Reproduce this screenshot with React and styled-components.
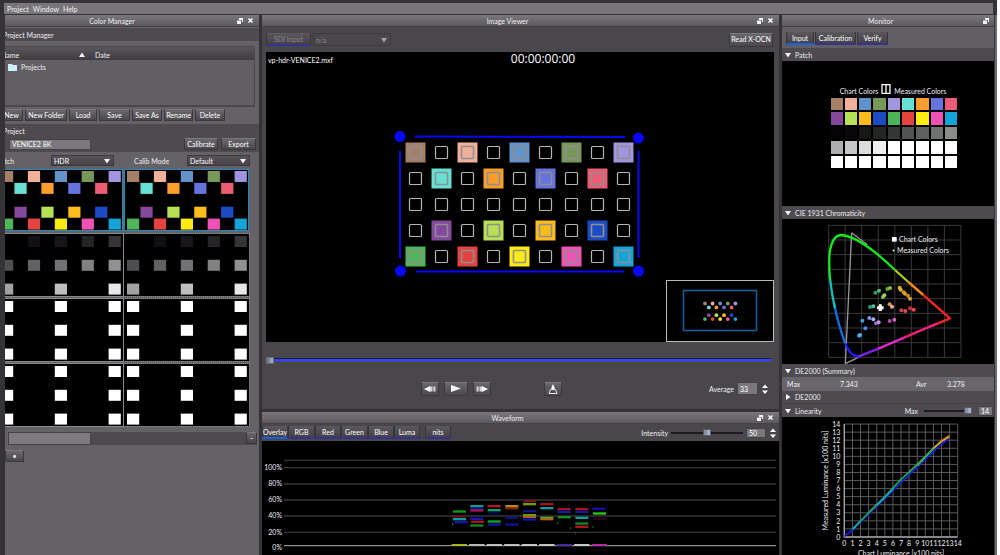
import React from "react";
import styled, { createGlobalStyle, css } from "styled-components";

const GlobalStyle = createGlobalStyle`
  * { box-sizing: border-box; }
  html, body { margin: 0; background: #ffffff; }
  body, button, input, select, table {
    font-family: Lato, "Open Sans", sans-serif;
    font-size: 7px;
    line-height: 10px;
    color: #efedf0;
  }
  button, input, select { margin: 0; padding: 0; border: 0; border-radius: 0; outline: 0; }
  h1, h2, p { margin: 0; font-size: inherit; font-weight: inherit; }
`;

const Screen = styled.div`
  height: 100vh;
  overflow: hidden;
  display: flex;
  flex-direction: column;
  background: #353238;
  border-right: 3px solid #ffffff;
`;

const MenuBar = styled.nav`
  flex: none;
  display: flex;
  gap: 4px;
  height: 12px;
  margin: 2px 4px 1px 4px;
  padding: 0 3px;
  border-top: 1px solid #39363b;
  background: #78767a;
`;

const MenuItem = styled.button`
  background: none;
  color: #f1f0f2;
`;

const Workspace = styled.main`
  flex: 1;
  min-height: 0;
  display: grid;
  grid-template-columns: 254px minmax(0, 1fr) 212px;
  gap: 3px;
  padding-left: 5px;
  padding-right: 1px;
  border-right: 2px solid #6d6b70;
`;

const Column = styled.div`
  display: flex;
  flex-direction: column;
  gap: 3px;
  min-width: 0;
  overflow: hidden;
`;

const Dock = styled.section`
  flex: ${(p) => (p.$grow ? "1" : "none")};
  display: flex;
  flex-direction: column;
  min-height: 0;
  overflow: hidden;
  background: ${(p) => p.$bg || "#4a474c"};
`;

const DockTitle = styled.header`
  flex: none;
  display: flex;
  align-items: center;
  height: 12px;
  padding: 0 4px 0 0;
  background: linear-gradient(#7a787c, #5c595e);
  border-bottom: 1px solid #454147;
  h2 { flex: 1; text-align: center; padding-right: ${(p) => p.$inset || 0}px; }
`;

const TitleButton = styled.button`
  width: 9px;
  height: 8px;
  margin-left: 2px;
  background: none;
  display: grid;
  place-items: center;
  svg { display: block; }
`;

const face = css`
  background: linear-gradient(#6a676c, #4b484d);
  border: 1px solid #3b373d;
  border-top-color: #7b787d;
`;

const Button = styled.button`
  ${face}
  flex: none;
  width: ${(p) => p.$w}px;
  height: ${(p) => p.$h || 12}px;
  line-height: 9px;
  white-space: nowrap;
  display: flex;
  align-items: center;
  justify-content: center;
  color: #ffffff;
`;

const Tab = styled.button`
  flex: none;
  width: ${(p) => p.$w}px;
  height: 13px;
  background: linear-gradient(#5b585d, #454247);
  border-left: 1px solid #39363b;
  border-right: 1px solid #39363b;
  border-bottom: 2px solid ${(p) => (p.$on ? "#1762e0" : "#34338f")};
  color: ${(p) => (p.$dim ? "#8b888d" : "#ffffff")};
  white-space: nowrap;
`;

/* Left dock */

const Bleed = styled.div`
  margin-left: -5px;
  display: flex;
  flex-direction: column;
`;

const GroupTitle = styled.h2`
  height: 13px;
  margin-top: 1px;
  padding: 2px 3px;
  background: #4e4a50;
`;

const FileFrame = styled.div`
  height: 61px;
  margin: 5px 4px 0 0;
  border: 1px solid #4b474d;
  border-bottom-width: 2px;
  background: #625f64;
`;

const FileTable = styled.table`
  width: 100%;
  border-collapse: collapse;
  th, td { padding: 0; font-weight: 400; text-align: left; height: 13px; }
  th { background: linear-gradient(#5a575c, #3f3c41); vertical-align: bottom; }
  th:first-child { width: 94px; }
  th span { display: flex; justify-content: space-between; align-items: center; padding-right: 10px; }
  td span { display: flex; align-items: center; gap: 4px; padding-left: 7px; }
`;

const ButtonRow = styled.div`
  display: flex;
  gap: 2px;
  padding-top: 2px;
`;

const ProjectGroup = styled.div`
  height: 28px;
  margin-top: 3px;
  padding: 2px 0 0 3px;
  background: #4e4a50;
`;

const FieldRow = styled.div`
  display: flex;
  align-items: center;
  gap: 3px;
  padding: 2px 3px 0 6px;
`;

const Field = styled.input`
  width: ${(p) => p.$w}px;
  height: ${(p) => p.$h || 11}px;
  padding: 0 2px;
  background: #7a787c;
  border: 1px solid #454147;
  color: #ffffff;
  appearance: textfield;
  &::-webkit-inner-spin-button { display: none; }
`;

const Grow = styled.span`
  flex: 1;
`;

const OptionRow = styled.div`
  display: flex;
  align-items: center;
  height: 17px;
`;

const OptionLabel = styled.label`
  width: ${(p) => p.$w}px;
  margin-left: ${(p) => p.$ml || 0}px;
  white-space: nowrap;
`;

const SelectBox = styled.span`
  position: relative;
  display: block;
  width: ${(p) => p.$w}px;
  height: ${(p) => p.$h || 11}px;
  select {
    display: block;
    width: 100%;
    height: 100%;
    padding-left: 2px;
    appearance: none;
    background: ${(p) => (p.$dim ? "#4a474c" : "linear-gradient(#58555a, #454147)")};
    border: 1px solid #3d393f;
    color: ${(p) => (p.$dim ? "#8b888d" : "#ffffff")};
  }
  svg { position: absolute; right: 4px; top: 50%; margin-top: -3px; pointer-events: none; }
`;

const ThumbGrid = styled.div`
  display: grid;
  grid-template-columns: 123px 125px;
  gap: 3px 1px;
  padding-bottom: 6px;
`;

const Thumb = styled.div`
  height: 62px;
  background: #000000;
  outline: 1px ${(p) => (p.$dotted ? "dotted" : "solid")} ${(p) => (p.$on ? "#2b88bd" : "#8a888c")};
  outline-offset: ${(p) => (p.$on ? -1 : 0)}px;
  svg { display: block; }
`;

const ScrollTrack = styled.div`
  display: flex;
  justify-content: space-between;
  height: 13px;
  margin: 0 2px 0 8px;
  background: #4e4a50;
`;

const ScrollThumb = styled.div`
  width: 83px;
  background: #7d7b7f;
  border: 1px solid #454147;
`;

const FootRow = styled.div`
  padding: 5px 0 0 5px;
`;

/* Center dock */

const ViewerBar = styled.div`
  display: flex;
  align-items: center;
  gap: 2px;
  height: 25px;
  padding: 0 6px 0 4px;
`;

const Viewer = styled.div`
  position: relative;
  height: 290px;
  margin: 0 5px 0 4px;
  background: #000000;
  > svg { display: block; width: 100%; height: 100%; }
`;

const FileName = styled.p`
  position: absolute;
  left: 2px;
  top: 3px;
  color: #ffffff;
`;

const TimeCode = styled.p`
  position: absolute;
  left: 0;
  right: 0;
  top: 0;
  padding-left: 46px;
  text-align: center;
  font-family: "Open Sans", sans-serif;
  font-size: 12px;
  line-height: 14px;
  color: #ffffff;
`;

const Navigator = styled.div`
  position: absolute;
  right: 0;
  bottom: 0;
  width: 108px;
  height: 62px;
  border: 1px solid #b9b8ba;
  background: #000000;
  svg { display: block; }
`;

const Timeline = styled.input`
  display: block;
  height: 13px;
  margin: 12px 8px 0 4px;
  appearance: none;
  background: linear-gradient(transparent 4px, #1b1850 4px, #1b1850 5px, #3f44d8 5px, #3f44d8 8px, #4a4a20 8px, #4a4a20 9px, transparent 9px);
  &::-webkit-slider-thumb {
    appearance: none;
    width: 8px;
    height: 7px;
    border: 1px solid #6b6a70;
    background: linear-gradient(90deg, #7c7a80 40%, #5f8fc4 40%, #a9aab0 70%);
  }
`;

const Transport = styled.div`
  display: flex;
  align-items: center;
  height: 42px;
  padding: 1px 10px 0 159px;
`;

const PlayGroup = styled.div`
  display: flex;
  gap: 5px;
  margin-right: 53px;
`;

const Spin = styled.label`
  display: flex;
  align-items: center;
  gap: 3px;
`;

const WaveBar = styled.div`
  flex: none;
  display: flex;
  align-items: center;
  height: 17px;
  padding: 0 2px 0 0;
`;

const TabGap = styled.span`
  width: 5px;
`;

const Slider = styled.input`
  width: ${(p) => p.$w}px;
  height: 8px;
  appearance: none;
  background: linear-gradient(transparent 3px, #1e1b20 3px, #1e1b20 5px, transparent 5px);
  &::-webkit-slider-thumb {
    appearance: none;
    width: 8px;
    height: 7px;
    border: 1px solid #5b5a62;
    background: linear-gradient(90deg, #8a8c96 30%, #5f8fc4 30%, #a9b4c4 70%);
  }
`;

const Plot = styled.div`
  flex: ${(p) => (p.$h ? "none" : "1")};
  height: ${(p) => (p.$h ? p.$h + "px" : "auto")};
  background: #000000;
  overflow: hidden;
  svg { display: block; margin: 0 auto; }
  text { fill: #efedf0; font-size: 21px; }
`;

/* Right dock */

const TabRow = styled.div`
  display: flex;
  height: 21px;
  padding: 5px 4px 0;
  gap: 1px;
  background: #625f64;
`;

const Fold = styled.div`
  flex: none;
  display: flex;
  align-items: center;
  height: 13px;
  padding: 0 1px 0 3px;
  background: #4e4a50;
  border-bottom: ${(p) => (p.$line ? 1 : 0)}px solid #454147;
  gap: 6px;
`;

const FoldButton = styled.button`
  display: flex;
  align-items: center;
  gap: 4px;
  background: none;
  white-space: nowrap;
`;

const PatchPanel = styled.div`
  height: 145px;
  padding-top: 22px;
  display: flex;
  flex-direction: column;
  align-items: center;
  background: #000000;
`;

const Legend = styled.div`
  display: flex;
  align-items: center;
  justify-content: center;
  gap: 3px;
  height: 12px;
  padding-left: 10px;
  margin-bottom: 3px;
  white-space: nowrap;
  span { padding-top: 4px; }
`;

const PatchGrid = styled.div`
  display: grid;
  grid-template-columns: repeat(9, 1fr);
  gap: 2px;
  width: 127px;
  height: 70px;
  margin-left: 12px;
`;

const Patch = styled.span`
  background: ${(p) => p.$c};
`;

const Summary = styled.dl`
  display: grid;
  grid-template-columns: 53px 76px 31px 1fr;
  align-items: center;
  height: 14px;
  margin: 0;
  padding-left: 5px;
  background: #69666b;
  dd { margin: 0; }
`;

const C = {
  brown: "#a48068", skin: "#f2b09a", sky: "#6493cb", moss: "#78985a", lilac: "#a294de",
  aqua: "#66e0d2", orange: "#fb9e2c", indigo: "#6474dc", rose: "#ec5c72",
  purple: "#84489c", lime: "#b8e054", gold: "#fcbc1c", blue: "#1c4cc4",
  green: "#50b458", red: "#e4443f", yellow: "#fcec14", pink: "#ee52b4", cyan: "#14a4d8",
};

const CHART = [
  [0, 0, C.brown], [2, 0, C.skin], [4, 0, C.sky], [6, 0, C.moss], [8, 0, C.lilac],
  [1, 1, C.aqua], [3, 1, C.orange], [5, 1, C.indigo], [7, 1, C.rose],
  [1, 3, C.purple], [3, 3, C.lime], [5, 3, C.gold], [7, 3, C.blue],
  [0, 4, C.green], [2, 4, C.red], [4, 4, C.yellow], [6, 4, C.pink], [8, 4, C.cyan],
];
const GRAYS = [
  [2, 0, "#131015"], [4, 0, "#19161b"], [6, 0, "#262427"], [8, 0, "#363437"],
  [0, 2, "#4e4d4f"], [2, 2, "#626164"], [4, 2, "#727173"], [6, 2, "#818082"], [8, 2, "#919092"],
  [0, 4, "#a2a1a3"], [4, 4, "#bfbebf"], [8, 4, "#e9e8e9"],
];
const WHITES = [0, 2, 4].flatMap((r) => [0, 4, 8].map((c) => [c, r, "#ffffff"]));

const PATCHES = [
  C.brown, C.skin, C.sky, C.moss, C.lilac, C.aqua, C.orange, C.indigo, C.rose,
  C.purple, C.lime, C.gold, C.blue, C.green, C.red, C.yellow, C.pink, C.cyan,
  "#050305", "#09060c", "#151815", "#222523", "#343834", "#505352", "#5e605f", "#707271", "#8b8d8b",
  "#aeadaf", "#c6c5c7", "#dcdcdc", "#f0f0f0", "#ffffff", "#ffffff", "#ffffff", "#ffffff", "#ffffff",
  ...Array(9).fill("#ffffff"),
];

const Arrow = ({ dir = "down", size = 6, fill = "#f5f4f6" }) => {
  const d = { down: "M0 1H6L3 5.5Z", up: "M0 5H6L3 .5Z", right: "M1 0V6L5.5 3Z" }[dir];
  return <svg width={size} height={size} viewBox="0 0 6 6"><path d={d} fill={fill} /></svg>;
};

const SpinArrows = () => (
  <svg width="8" height="12" viewBox="0 0 8 12">
    <path d="M1 5L4 1.5L7 5ZM1 7.5H7L4 11Z" fill="#ffffff" />
  </svg>
);

function WindowTitle({ children, close = true, inset }) {
  return (
    <DockTitle $inset={inset}>
      <h2>{children}</h2>
      <TitleButton aria-label="Float">
        <svg width="6" height="6" viewBox="0 0 6 6">
          <path d="M2 0H6V4H5V2H2ZM0 2.5H4V6H0Z" fill="#f1f0f2" />
        </svg>
      </TitleButton>
      {close && (
        <TitleButton aria-label="Close">
          <svg width="5" height="5" viewBox="0 0 5 5">
            <path d="M.5 .5L4.5 4.5M4.5 .5L.5 4.5" stroke="#fff" strokeWidth="1.4" />
          </svg>
        </TitleButton>
      )}
    </DockTitle>
  );
}

function Swatches({ cells, x }) {
  return (
    <svg width={x + 121} height="62" viewBox={`0 0 ${x + 121} 62`}>
      {cells.map(([c, r, fill], i) => (
        <rect key={i} x={x + c * 13.45} y={2 + r * 11.9} width="12.2" height="11" fill={fill} />
      ))}
    </svg>
  );
}

function ColorManager() {
  return (
    <Dock $grow $bg="#656267">
      <WindowTitle inset={14}>Color Manager</WindowTitle>
      <Bleed>
        <GroupTitle>Project Manager</GroupTitle>
        <FileFrame>
          <FileTable>
            <thead>
              <tr><th><span>Name<Arrow dir="up" /></span></th><th>Date</th></tr>
            </thead>
            <tbody>
              <tr>
                <td>
                  <span>
                    <svg width="9" height="8" viewBox="0 0 9 8"><path d="M0 1H4L5 2H9V8H0Z" fill="#cdeefa" /></svg>
                    Projects
                  </span>
                </td>
                <td />
              </tr>
            </tbody>
          </FileTable>
        </FileFrame>
        <ButtonRow>
          <Button $w={23}>New</Button>
          <Button $w={42}>New Folder</Button>
          <Button $w={28}>Load</Button>
          <Button $w={31}>Save</Button>
          <Button $w={30}>Save As</Button>
          <Button $w={29}>Rename</Button>
          <Button $w={30}>Delete</Button>
        </ButtonRow>
        <ProjectGroup>
          <h2>Project</h2>
          <FieldRow>
            <Field $w={82} defaultValue="VENICE2 8K" aria-label="Project name" />
            <Grow />
            <Button $w={34}>Calibrate</Button>
            <Button $w={35}>Export</Button>
          </FieldRow>
        </ProjectGroup>
        <OptionRow>
          <OptionLabel htmlFor="patch" $w={54} $ml={-3}>Patch</OptionLabel>
          <SelectBox $w={63}>
            <select id="patch"><option>HDR</option></select>
            <Arrow />
          </SelectBox>
          <OptionLabel htmlFor="mode" $w={53} $ml={20}>Calib Mode</OptionLabel>
          <SelectBox $w={63}>
            <select id="mode"><option>Default</option></select>
            <Arrow />
          </SelectBox>
        </OptionRow>
        <ThumbGrid>
          {[CHART, GRAYS, WHITES, WHITES].map((cells, i) => (
            <React.Fragment key={i}>
              <Thumb $on={i === 0}><Swatches cells={cells} x={1} /></Thumb>
              <Thumb $on={i === 0} $dotted={i > 0}><Swatches cells={cells} x={3} /></Thumb>
            </React.Fragment>
          ))}
        </ThumbGrid>
        <ScrollTrack>
          <ScrollThumb />
          <Button $w={11} aria-label="Scroll">–</Button>
        </ScrollTrack>
        <FootRow><Button $w={19} aria-label="Collapse">•</Button></FootRow>
      </Bleed>
    </Dock>
  );
}

function ChartOverlay() {
  const filled = new Map(CHART.map(([c, r, f]) => [`${c},${r}`, f]));
  const cells = [];
  for (let r = 0; r < 5; r++) {
    for (let c = 0; c < 9; c++) {
      const x = 149.5 + c * 26;
      const y = 100.5 + r * 26;
      const fill = filled.get(`${c},${r}`);
      cells.push(
        <g key={`${c},${r}`}>
          {fill && <rect x={x - 10} y={y - 10} width="20" height="20" fill={fill} />}
          <rect x={x - 6} y={y - 6} width="12" height="12" rx="1" fill="none"
            stroke={fill ? "#8f8f92" : "#b5b5b5"} strokeWidth={fill ? 1.6 : 1.2} />
        </g>
      );
    }
  }
  return (
    <svg viewBox="0 0 508 290">
      {cells}
      <g stroke="#0808f4" strokeWidth="2">
        <path d="M149 84.5L359 85M134 99V206M150 219.5H358M372.5 99V206" />
      </g>
      <g fill="#0808f8">
        <circle cx="134" cy="84.5" r="5.5" />
        <circle cx="372.5" cy="86" r="5.5" />
        <circle cx="134.5" cy="219" r="5.5" />
        <circle cx="372.5" cy="219" r="5.5" />
      </g>
    </svg>
  );
}

function ImageViewer() {
  return (
    <Dock>
      <WindowTitle>Image Viewer</WindowTitle>
      <ViewerBar>
        <Tab $w={45} $dim>SDI Input</Tab>
        <SelectBox $w={78} $h={13} $dim>
          <select aria-label="SDI source"><option>n/a</option></select>
          <Arrow fill="#a5a3a7" />
        </SelectBox>
        <Grow />
        <Button $w={44} $h={14}>Read X-OCN</Button>
      </ViewerBar>
      <Viewer>
        <ChartOverlay />
        <FileName>vp-hdr-VENICE2.mxf</FileName>
        <TimeCode>00:00:00:00</TimeCode>
        <Navigator>
          <svg width="106" height="60" viewBox="0 0 106 60">
            <rect x="16.5" y="9.5" width="73" height="40" fill="none" stroke="#0e62a4" strokeWidth="1.5" />
            {CHART.map(([c, r, f], i) => (
              <circle key={i} cx={38 + c * 3.8} cy={22.5 + r * 3.9} r="1.9" fill={f} />
            ))}
          </svg>
        </Navigator>
      </Viewer>
      <Timeline type="range" defaultValue="0" aria-label="Timeline" />
      <Transport>
        <PlayGroup>
          <Button $w={18} $h={14} aria-label="Step back">
            <svg width="12" height="6" viewBox="0 0 12 6"><path d="M0 3L6 0V6Z" fill="#fff" /><path d="M6 .5H8.5V5.500H6ZM9.300 .5H11.500V5.500H9.300Z" fill="#d4d3d6" /></svg>
          </Button>
          <Button $w={24} $h={14} aria-label="Play">
            <svg width="10" height="7" viewBox="0 0 10 7"><path d="M0 0L10 3.5L0 7Z" fill="#fff" /></svg>
          </Button>
          <Button $w={18} $h={14} aria-label="Step forward">
            <svg width="12" height="6" viewBox="0 0 12 6"><path d="M12 3L6 0V6Z" fill="#fff" /><path d="M.5 .5H2.700V5.500H.5ZM3.500 .5H6V5.500H3.500Z" fill="#d4d3d6" /></svg>
          </Button>
        </PlayGroup>
        <Button $w={18} $h={14} aria-label="Capture">
          <svg width="10" height="10" viewBox="0 0 10 10">
            <path d="M5 0L6.5 3.5V5.500H3.500V3.500Z" fill="#fff" />
            <path d="M2.500 5.500H7.500L9 9.500H1Z" fill="none" stroke="#e4e3e5" strokeWidth="1" />
          </svg>
        </Button>
        <Grow />
        <Spin>Average<Field $w={21} $h={13} type="number" defaultValue="33" /><SpinArrows /></Spin>
      </Transport>
    </Dock>
  );
}

/* [left, top, color] of each trace; traces are 39 units wide */
const TRACES = [
  [579, 498, "#0a9a18"], [577, 513, "#6a1212"], [579, 521, "#0a9aa0"], [584, 530, "#1414a8"],
  [631, 482, "#129a94"], [631, 490, "#1414a0"], [631, 495, "#a41848"], [631, 520, "#1c14b8"], [633, 529, "#a8141c"], [631, 540, "#158a18"],
  [683, 482, "#b01c18"], [683, 494, "#12a078"], [683, 503, "#080838"], [683, 528, "#0ca81c"], [684, 537, "#1414a0"],
  [736, 482, "#b88a12"], [736, 488, "#8a2c0c"], [736, 517, "#10107c"], [736, 537, "#10109c"],
  [789, 467, "#7c1214"], [789, 476, "#74980c"], [789, 497, "#101484"], [789, 509, "#6c9c1c"], [789, 514, "#a8601c"], [789, 522, "#1414a8"],
  [841, 476, "#a81418"], [841, 488, "#129a98"], [841, 517, "#58a82c"], [841, 521, "#a8641c"],
  [893, 491, "#a81424"], [893, 499, "#1414a8"], [893, 515, "#129020"],
  [946, 491, "#b01418"], [946, 499, "#1414a8"], [946, 517, "#10a09c"], [946, 534, "#108818"], [946, 544, "#b01418"],
  [997, 490, "#1010a8"], [999, 504, "#28c818"], [1000, 520, "#2a0622"],
];
const FLOOR = ["#a8b024", "#b8b8b8", "#c0c0c0", "#c0c0c0", "#c4c4c4", "#c4c4c4", "#4a28a0", "#c8c8c8", "#b828a8"];

function Waveform() {
  const lines = [370, 419, 467, 515, 564, 610];
  return (
    <Dock $grow>
      <WindowTitle>Waveform</WindowTitle>
      <WaveBar>
        <Tab $w={26} $on>Overlay</Tab>
        <Tab $w={27}>RGB</Tab>
        <Tab $w={26}>Red</Tab>
        <Tab $w={27}>Green</Tab>
        <Tab $w={26}>Blue</Tab>
        <Tab $w={26}>Luma</Tab>
        <TabGap />
        <Tab $w={26}>nits</Tab>
        <Grow />
        <Spin>
          Intensity
          <Slider $w={72} type="range" defaultValue="50" aria-label="Intensity" />
          <Field $w={20} $h={10} type="number" defaultValue="50" aria-label="Intensity value" />
          <SpinArrows />
        </Spin>
      </WaveBar>
      <Plot>
        <svg width="100%" height="120" viewBox="6 290 1548 360" preserveAspectRatio="xMinYMin meet">
          <path d="M72 348H1548M72 370H1548M72 419H1548M72 467H1548M72 515H1548M72 564H1548" stroke="#343337" strokeWidth="4" />
          <path d="M72 604H1548" stroke="#8c8b8e" strokeWidth="4" />
          {lines.map((y, i) => (
            <text key={y} x="66" y={y + 7} textAnchor="end">{100 - i * 20}%</text>
          ))}
          {TRACES.map(([x, y, fill], i) => (
            <rect key={i} x={x} y={y} width="39" height="7" fill={fill} />
          ))}
          {FLOOR.map((fill, i) => (
            <rect key={i} x={575 + i * 52.5} y="599" width="46" height="6" fill={fill} />
          ))}
          <path d="M578 536V542M893 533V539M932 549V555M946 562V568M999 545V550" stroke="#14681c" strokeWidth="4" />
        </svg>
      </Plot>
    </Dock>
  );
}

/* [x, y, color] of the measured points on the chromaticity plot */
const POINTS = [
  [286, 278, "#2ca05c"], [297, 272, "#48c070"], [322, 267, "#58a838"], [330, 264, "#90b840"],
  [309, 291, "#88c050"], [313, 286, "#a0cc60"], [359, 263, "#d8b020"], [362, 269, "#e0b828"],
  [371, 277, "#d89820"], [375, 281, "#e0a030"], [384, 287, "#c88c1c"], [390, 296, "#e09c40"],
  [270, 321, "#28a078"], [280, 319, "#50c098"], [329, 313, "#d89068"], [336, 320, "#f0b090"],
  [364, 331, "#c04860"], [376, 333, "#e05058"], [390, 325, "#c83038"], [401, 329, "#f04848"],
  [247, 362, "#38a0d8"], [268, 354, "#7898e8"], [280, 358, "#b0b0f0"], [256, 385, "#5088e8"],
  [288, 370, "#9868c8"], [296, 367, "#c090e0"], [329, 363, "#b048a0"], [343, 359, "#c868b8"],
  [237, 407, "#389cd8"], [240, 405, "#58b0e8"],
];

const LOCUS = [
  ["M235 470C215 468 204 452 196 430", "#2218ff"],
  ["M196 430C182 395 170 350 162 310", "#1070e0"],
  ["M165 325C158 295 153 262 150 235", "#10c0b8"],
  ["M150 238C147 205 147 175 150 150C156 122 168 106 182 105C212 106 240 124 268 144C296 164 322 188 345 210", "#12e81c"],
  ["M345 210L385 246", "#b8c810"],
  ["M385 246L430 285", "#f88c10"],
  ["M430 285L510 355L458 377", "#f42424"],
  ["M470 371L365 416", "#f0207c"],
  ["M370 414L290 448", "#e828d0"],
  ["M295 446L235 470", "#7c20f0"],
];

function Chromaticity() {
  const xs = Array.from({ length: 9 }, (_, i) => 146 + i * 49.6);
  const ys = Array.from({ length: 10 }, (_, i) => 76 + i * 44);
  return (
    <Plot $h={145}>
      <svg width="210" height="145" viewBox="9 57 630 435">
        <path d={xs.map((x) => `M${x} 76V472`).join("") + ys.map((y) => `M146 ${y}H543`).join("")}
          stroke="#3b383e" strokeWidth="3" fill="none" />
        <path d="M215 98L196 491L235 472M215 98L262 134M430 388L510 355" stroke="#98969c" strokeWidth="4" fill="none" />
        {LOCUS.map(([d, stroke]) => (
          <path key={d} d={d} stroke={stroke} strokeWidth="7" fill="none" strokeLinejoin="round" />
        ))}
        {POINTS.map(([x, y, fill], i) => <circle key={i} cx={x} cy={y} r="6" fill={fill} />)}
        <path d="M301 313V333M291 323H311" stroke="#ffffff" strokeWidth="9" />
        <rect x="336" y="111" width="14" height="14" fill="#ffffff" />
        <rect x="338" y="149" width="5" height="5" fill="#ffffff" />
        <text x="357" y="126">Chart Colors</text>
        <text x="351" y="158">Measured Colors</text>
      </svg>
    </Plot>
  );
}

function Linearity() {
  const steps = Array.from({ length: 15 }, (_, i) => i);
  const gx = (v) => 193 + v * 24.3;
  const gy = (v) => 531 - v * 24.2;
  return (
    <Plot>
      <svg width="210" height="145" viewBox="9 171 630 435">
        <path d={steps.map((v) => `M${gx(v)} 192V531M193 ${gy(v)}H533`).join("")} stroke="#5d5a62" strokeWidth="3" />
        <path d="M193 192V531H533" stroke="#a5a3a8" strokeWidth="4" fill="none" />
        {steps.map((v) => (
          <g key={v}>
            <text x="181" y={gy(v) + 8} textAnchor="end">{v}</text>
            <text x={gx(v)} y="557" textAnchor="middle">{v}</text>
          </g>
        ))}
        <g fill="none" strokeWidth="5" strokeLinejoin="round">
          <path d="M193 529L220 507L387 345L460 275L484 252L508 237" stroke="#1c1cf0" />
          <path d="M265 459L290 434M387 336L412 312L436 290L484 242L508 226" stroke="#e03c1c" />
          <path d="M412 316L460 265L484 245L508 230" stroke="#b8c010" />
          <path d="M218 507L265 459L315 410L363 358L412 314L460 266" stroke="#10b050" />
          <path d="M218 508L240 484M290 436L340 386" stroke="#18a8a8" />
        </g>
        <text x="363" y="588" textAnchor="middle">Chart Luminance [x100 nits]</text>
        <text transform="translate(143 362) rotate(-90)" textAnchor="middle">Measured Luminance [x100 nits]</text>
      </svg>
    </Plot>
  );
}

function Monitor() {
  return (
    <Dock $grow>
      <WindowTitle close={false}>Monitor</WindowTitle>
      <TabRow>
        <Tab $w={28} $on>Input</Tab>
        <Tab $w={41}>Calibration</Tab>
        <Tab $w={31}>Verify</Tab>
      </TabRow>
      <Fold><FoldButton><Arrow />Patch</FoldButton></Fold>
      <PatchPanel>
        <Legend>
          <span>Chart Colors</span>
          <svg width="10" height="10" viewBox="0 0 10 10">
            <path d="M1 .7H9V9.3H1ZM5 .7V9.3" fill="none" stroke="#ffffff" strokeWidth="1.3" />
          </svg>
          <span>Measured Colors</span>
        </Legend>
        <PatchGrid>{PATCHES.map((c, i) => <Patch key={i} $c={c} />)}</PatchGrid>
      </PatchPanel>
      <Fold><FoldButton><Arrow />CIE 1931 Chromaticity</FoldButton></Fold>
      <Chromaticity />
      <Fold><FoldButton><Arrow />DE2000 (Summary)</FoldButton></Fold>
      <Summary>
        <dt>Max</dt><dd>7.343</dd>
        <dt>Avr</dt><dd>3.278</dd>
      </Summary>
      <Fold $line><FoldButton><Arrow dir="right" />DE2000</FoldButton></Fold>
      <Fold>
        <FoldButton><Arrow />Linearity</FoldButton>
        <Grow />
        Max
        <Slider $w={48} type="range" defaultValue="100" aria-label="Linearity max" />
        <Field $w={15} $h={10} type="number" defaultValue="14" aria-label="Linearity max value" />
      </Fold>
      <Linearity />
    </Dock>
  );
}

export default function App() {
  return (
    <>
      <GlobalStyle />
      <Screen>
        <MenuBar>
          <MenuItem>Project</MenuItem>
          <MenuItem>Window</MenuItem>
          <MenuItem>Help</MenuItem>
        </MenuBar>
        <Workspace>
          <Column><ColorManager /></Column>
          <Column>
            <ImageViewer />
            <Waveform />
          </Column>
          <Column><Monitor /></Column>
        </Workspace>
      </Screen>
    </>
  );
}
